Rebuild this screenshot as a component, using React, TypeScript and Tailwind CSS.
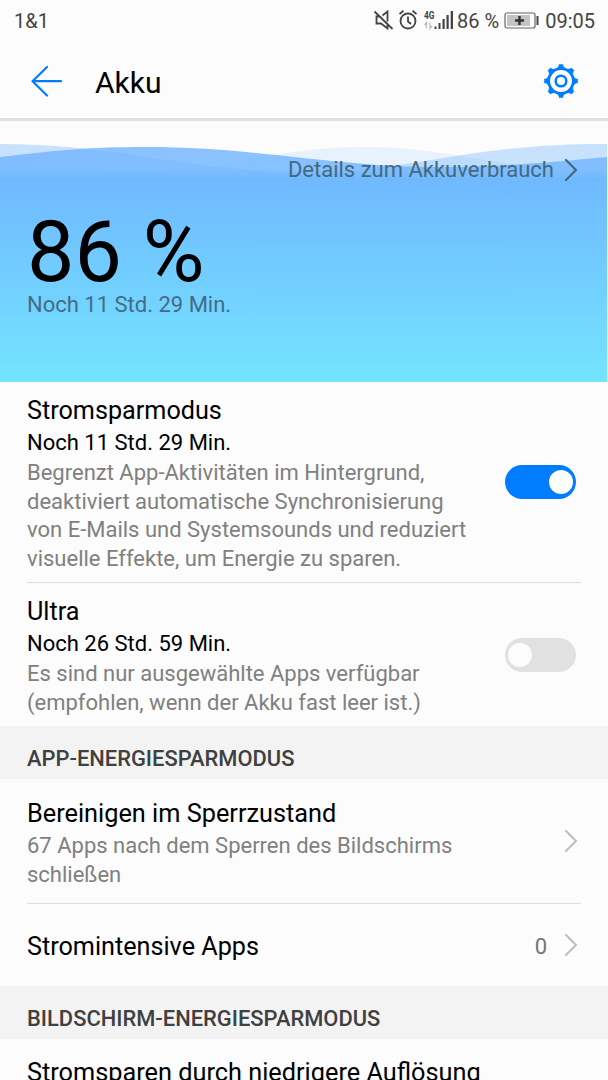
import type { ReactNode } from "react";
import clsx from "clsx";

function StatusBar() {
  return (
    <div className="flex h-10 items-center justify-between pl-[14px] pr-[13px] pt-px text-[20px] text-[#444]">
      <span>1&amp;1</span>
      <div className="flex items-center">
        <svg width="22" height="22" viewBox="0 0 22 22" fill="none" stroke="#444" strokeWidth="1.8">
          <path d="M7 6.500H3.500v7H8l6.500 5v-5M9.500 5.500l5-4v10M1.500 1.500l18 17.500" />
        </svg>
        <svg className="ml-[3px]" width="20" height="22" viewBox="0 0 20 22" fill="none" stroke="#444" strokeWidth="1.8">
          <circle cx="10" cy="11" r="7.500" />
          <path d="M10 6.500v5l3 2.500M1.500 4l4-3.300M18.500 4l-4-3.300" />
        </svg>
        <svg className="ml-[6px]" width="30" height="22" viewBox="0 0 30 22">
          <text x="0" y="8.500" fontSize="10.500" fontWeight="700" fill="#444" textLength="10.500" lengthAdjust="spacingAndGlyphs">4G</text>
          <path d="M2.500 18.500v-6l-2 2.500M6 12.500v6l2-2.500" stroke="#bbb" strokeWidth="1.300" fill="none" />
          <path d="M10.500 16.500h2v2.500h-2zM14.500 13h2v6h-2zM18.500 9h2.200v10h-2.200zM22.500 5h2.200v14h-2.200zM26.700 1h2.300v18h-2.300z" fill="#444" />
        </svg>
        <span className="ml-[3px]">86 %</span>
        <svg className="ml-[5px]" width="36" height="18" viewBox="0 0 36 18">
          <rect x="1" y="1" width="30" height="15" rx="2" fill="none" stroke="#666" strokeWidth="1.200" />
          <rect x="3" y="3" width="23" height="11" fill="#c4c4c4" />
          <path d="M11 8.500h9M15.500 4v9" stroke="#333" strokeWidth="2.400" />
          <path d="M33.500 4v9" stroke="#444" strokeWidth="2" />
        </svg>
        <span className="ml-[5px]">09:05</span>
      </div>
    </div>
  );
}

function GearIcon() {
  return (
    <svg width="36" height="36" viewBox="-18 -18 36 36" fill="none" stroke="#007dff">
      <circle r="12.300" strokeWidth="2.700" />
      <circle r="5.300" strokeWidth="2.500" />
      {[0, 45, 90, 135, 180, 225, 270, 315].map((deg) => (
        <path key={deg} d="M-4-12.500L-2-15V-16.600H2V-15L4-12.500Z" fill="#007dff" strokeWidth="0.500" transform={`rotate(${deg})`} />
      ))}
    </svg>
  );
}

function Header() {
  return (
    <header className="flex h-[81px] items-center border-b-[3px] border-[#dfdfdf] pl-[31px] pr-[29px]">
      <svg className="mt-1" width="32" height="32" viewBox="0 0 32 32" fill="none" stroke="#007dff" strokeWidth="2.200" strokeLinecap="round" strokeLinejoin="round">
        <path d="M16 2L1.500 16.200 16 30.500M1.500 16.200H30" />
      </svg>
      <h1 className="ml-[32px] mt-[6px] flex-1 text-[30px] text-black">Akku</h1>
      <div className="mt-[3px]">
        <GearIcon />
      </div>
    </header>
  );
}

function Chevron({ color = "#c0c0c0" }: { color?: string }) {
  return (
    <svg className="shrink-0" width="14" height="24" viewBox="0 0 14 24" fill="none" stroke={color} strokeWidth="2.200" strokeLinecap="round" strokeLinejoin="round">
      <path d="M2 2l10 10L2 22" />
    </svg>
  );
}

function Waves() {
  return (
    <svg className="absolute left-0 top-0" width="607" height="260" viewBox="0 0 607 260">
      <defs>
        <linearGradient id="sea" x1="0" y1="22" x2="0" y2="260" gradientUnits="userSpaceOnUse">
          <stop offset="0" stopColor="#6fb3ff" />
          <stop offset="1" stopColor="#74e4ff" />
        </linearGradient>
        <linearGradient id="front" x1="0" y1="22" x2="0" y2="260" gradientUnits="userSpaceOnUse">
          <stop offset="0" stopColor="#6fb3ff" stopOpacity="0.8" />
          <stop offset="0.11" stopColor="#6fb5ff" stopOpacity="0.8" />
          <stop offset="0.15" stopColor="#70b9ff" />
          <stop offset="1" stopColor="#74e4ff" />
        </linearGradient>
      </defs>
      <path d="M0 37C40 46 90 48 140 48C240 48 270 25 367 25C450 25 490 47 607 48V260H0Z" fill="url(#sea)" opacity="0.14" />
      <path d="M0 22C120 22 190 50 304 50C420 50 460 22 607 22V260H0Z" fill="url(#sea)" opacity="0.37" />
      <path d="M0 35C60 28 90 25 145 25C260 25 330 45 440 45C500 45 540 41 607 35V260H0Z" fill="url(#front)" />
    </svg>
  );
}

function BatteryHero() {
  return (
    <section className="relative mt-px h-[260px]">
      <Waves />
      <div className="relative flex flex-col">
        <div className="flex items-center justify-end gap-[10px] pr-[30px] pt-[34px] text-[22px] leading-[28px] text-[#43697f]">
          Details zum Akkuverbrauch
          <Chevron color="#43697f" />
        </div>
        <div className="mt-[28px] pl-[27px] text-[84.4px] leading-[82px] text-black">86 %</div>
        <div className="-mt-[3px] pl-[27px] text-[22px] leading-[28px] text-[#436c87]">Noch 11 Std. 29 Min.</div>
      </div>
    </section>
  );
}

function Toggle({ on }: { on: boolean }) {
  return (
    <div className={clsx("flex h-[34px] w-[71px] shrink-0 items-center rounded-full px-[3px]", on ? "justify-end bg-[#007dff]" : "bg-[#e1e1e1]")}>
      <div className="size-6 rounded-full bg-[#fcfcfc]" />
    </div>
  );
}

interface ModeRowProps {
  title: string;
  remaining: string;
  lines: string[];
  on: boolean;
  className: string;
}

function ModeRow({ title, remaining, lines, on, className }: ModeRowProps) {
  return (
    <div className={clsx("mx-[27px] flex items-center justify-between pr-[5px]", className)}>
      <div className="self-start pt-[13px]">
        <p className="text-[25.2px] leading-[32px] text-black">{title}</p>
        <p className="text-[22px] leading-[32px] text-black">{remaining}</p>
        <Description lines={lines} />
      </div>
      <Toggle on={on} />
    </div>
  );
}

function Description({ lines }: { lines: string[] }) {
  return (
    <div className="text-[22px] leading-[28.67px] text-[#808080]">
      {lines.map((line) => (
        <p key={line} className="whitespace-nowrap">{line}</p>
      ))}
    </div>
  );
}

function SectionTitle({ children }: { children: ReactNode }) {
  return (
    <h2 className="flex h-[53px] items-center bg-[#f3f3f3] pl-[27px] pt-[14px] text-[21.9px] font-medium text-[#404040]">
      {children}
    </h2>
  );
}

export default function App() {
  return (
    <div className="h-[1080px] w-[608px] overflow-hidden bg-[#fcfcfc] font-['Roboto',sans-serif]">
      <StatusBar />
      <Header />
      <BatteryHero />
      <ModeRow
        title="Stromsparmodus"
        remaining="Noch 11 Std. 29 Min."
        lines={[
          "Begrenzt App-Aktivitäten im Hintergrund,",
          "deaktiviert automatische Synchronisierung",
          "von E-Mails und Systemsounds und reduziert",
          "visuelle Effekte, um Energie zu sparen.",
        ]}
        on
        className="h-[201px] border-b border-[#dedede]"
      />
      <ModeRow
        title="Ultra"
        remaining="Noch 26 Std. 59 Min."
        lines={["Es sind nur ausgewählte Apps verfügbar", "(empfohlen, wenn der Akku fast leer ist.)"]}
        on={false}
        className="h-[143px]"
      />
      <SectionTitle>APP-ENERGIESPARMODUS</SectionTitle>
      <div className="mx-[27px] flex h-[125px] items-center justify-between border-b border-[#dedede] pr-[3px]">
        <div className="pt-[5px]">
          <p className="mb-[2px] text-[25.3px] leading-[32px] text-black">Bereinigen im Sperrzustand</p>
          <Description lines={["67 Apps nach dem Sperren des Bildschirms", "schließen"]} />
        </div>
        <Chevron />
      </div>
      <div className="flex h-[82px] items-center pl-[27px] pr-[30px]">
        <p className="flex-1 pt-[3px] text-[25.2px] text-black">Stromintensive Apps</p>
        <span className="mr-[17px] pt-[2px] text-[22px] text-[#757575]">0</span>
        <Chevron />
      </div>
      <SectionTitle>BILDSCHIRM-ENERGIESPARMODUS</SectionTitle>
      <p className="pl-[27px] pt-[18px] text-[25.3px] leading-[32px] text-black">Stromsparen durch niedrigere Auflösung</p>
    </div>
  );
}
